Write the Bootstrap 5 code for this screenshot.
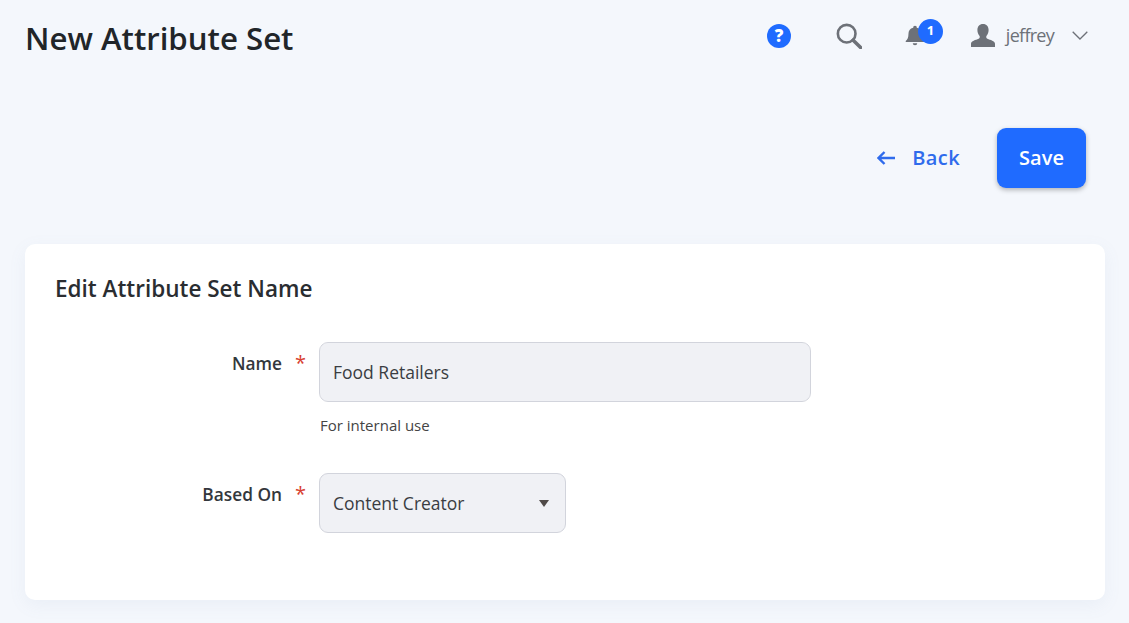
<!doctype html>
<html><head><meta charset="utf-8">
<link href="https://cdn.jsdelivr.net/npm/bootstrap@5.3.0/dist/css/bootstrap.min.css" rel="stylesheet">
<style>
html,body{height:623px;overflow:hidden}
body{background:#f4f7fc;font-family:"Open Sans",sans-serif;color:#212529}
.topbar{height:78px;padding:0 41px 6px 25px}
.pagetitle{font-size:31.2px;font-weight:600;line-height:1;margin:6px 0 0;color:#212529}
.toolgroup{margin-top:-1px}
.helpicon{margin-right:45px}
.searchicon{margin-right:43px}
.bellwrap{width:39px;height:30px;margin-right:27px}
.countpill{top:-2px;left:13px;width:25px;height:25px;background:#1f6bff;color:#fff;font-size:13px;font-weight:700}
.username{font-size:18px;color:#6d7178;letter-spacing:-.73px;margin:0 18px 0 11px}
.actionbar{height:166px;padding:50px 43px 0 0}
.backlink{color:#2f6bec;font-size:20px;font-weight:600;text-decoration:none;letter-spacing:.4px;margin-right:37px;height:60px}
.backlink svg{margin-right:17px}
.savebtn,.savebtn:hover{background:#1f6bff;border:0;color:#fff;font-size:20px;font-weight:600;width:89px;height:60px;border-radius:9px;box-shadow:0 2px 5px rgba(0,0,0,.28)}
.formpanel{margin:0 24px 0 25px;height:356px;border-radius:10px;padding:28px 30px;box-shadow:0 5px 18px rgba(120,140,180,.08);border:0}
.paneltitle{font-size:22.500px;font-weight:600;line-height:33px;margin:0 0 37px;color:#2a2d31}
.fieldlabel{width:264px;padding:8px 13px 0 0;margin:0;font-size:17.300px;font-weight:600;color:#33373c;line-height:26px}
.reqmark{color:#d8402f;font-size:20px;font-weight:400;margin-left:13px}
.textbox,.textbox:focus,.pickbox,.pickbox:focus{background-color:#f0f1f5;border:1px solid #d2d4dc;border-radius:9px;height:60px;font-size:17.500px;color:#3a3d42;padding:0 13px;box-shadow:none}
.textbox{width:492px}
.pickbox,.pickbox:focus{width:247px;background-image:url("data:image/svg+xml,%3Csvg xmlns='http://www.w3.org/2000/svg' width='10' height='7'%3E%3Cpath d='M0 0h10L5 7z' fill='%23504a48'/%3E%3C/svg%3E");background-position:right 16px center;background-size:10px 7px;background-repeat:no-repeat}
.hinttext{font-size:15px;color:#444;margin:13px 0 38px 1px;line-height:20px}
</style></head><body>
<div class="topbar d-flex align-items-center justify-content-between">
<h1 class="pagetitle">New Attribute Set</h1>
<div class="toolgroup d-flex align-items-center">
<svg class="helpicon" width="24" height="24" viewBox="0 0 24 24"><circle cx="12" cy="12" r="12" fill="#1f6bff"/><text x="12" y="18" text-anchor="middle" font-size="17" font-weight="800" font-family="Open Sans" fill="#fff">?</text></svg>
<svg class="searchicon" width="26" height="26" viewBox="0 0 28 28"><circle cx="11.500" cy="11.500" r="9.500" fill="none" stroke="#6d7178" stroke-width="2.800"/><path d="M18.500 18.500l8 8" stroke="#6d7178" stroke-width="3.800" stroke-linecap="round"/></svg>
<div class="bellwrap position-relative">
<svg width="20" height="22" viewBox="0 0 22 26" preserveAspectRatio="none" class="d-block mt-1"><path d="M11 1a2 2 0 0 1 2 2.200c3.600.9 5.200 3.800 5.200 7.300 0 4.200 1 6.300 3 8.500v1H.8v-1c2-2.200 3-4.300 3-8.500 0-3.500 1.600-6.400 5.200-7.300A2 2 0 0 1 11 1z" fill="#6d7178"/><path d="M8.500 21.500h5a2.500 2.500 0 0 1-5 0z" fill="#6d7178"/></svg>
<span class="countpill position-absolute rounded-circle d-flex align-items-center justify-content-center">1</span>
</div>
<svg width="24" height="23" viewBox="0 0 24 23"><path d="M12 0c3.600 0 5.600 2.600 5.600 6 0 2.400-.8 4.600-2.200 6-.4 1.300-.2 2.100 1 2.700 2.800 1.200 7.600 2.200 7.600 5V23H0v-3.300c0-2.800 4.800-3.800 7.600-5 1.200-.6 1.400-1.400 1-2.700C7.200 10.600 6.400 8.400 6.400 6c0-3.400 2-6 5.600-6z" fill="#6d7178"/></svg>
<span class="username">jeffrey</span>
<svg width="16" height="9" viewBox="0 0 16 9"><path d="M.7.7 8 8 15.300.7" fill="none" stroke="#6d7178" stroke-width="1.300"/></svg>
</div>
</div>
<div class="actionbar d-flex justify-content-end align-items-start">
<a href="#" class="backlink d-flex align-items-center"><svg width="18" height="14" viewBox="0 0 18 14"><path d="M7.500 1 1.500 7l6 6M1.500 7H18" fill="none" stroke="#2f6bec" stroke-width="2.400"/></svg>Back</a>
<button class="btn savebtn" type="button">Save</button>
</div>
<div class="card formpanel">
<h2 class="paneltitle">Edit Attribute Set Name</h2>
<div class="d-flex">
<label class="fieldlabel text-end" for="nm">Name<span class="reqmark">*</span></label>
<div>
<input id="nm" class="form-control textbox" value="Food Retailers">
<div class="hinttext">For internal use</div>
</div>
</div>
<div class="d-flex">
<label class="fieldlabel text-end" for="bo">Based On<span class="reqmark">*</span></label>
<select id="bo" class="form-select pickbox"><option>Content Creator</option></select>
</div>
</div>
</body></html>
